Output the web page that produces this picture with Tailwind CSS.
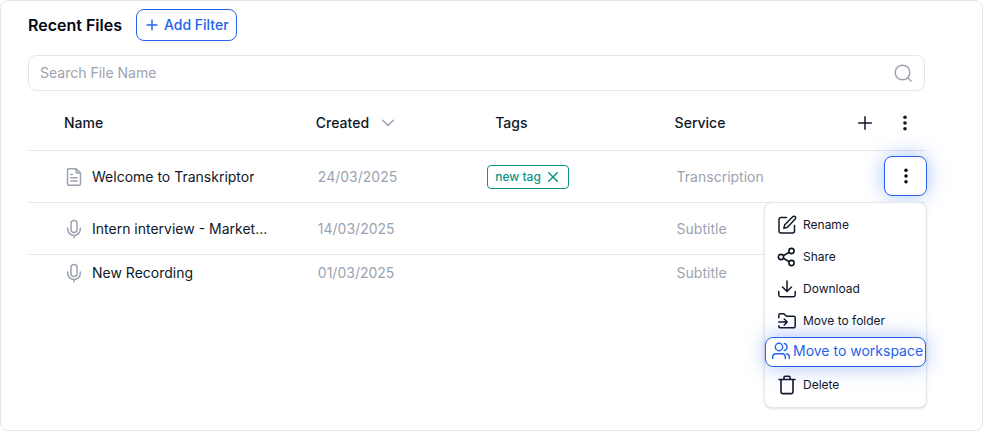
<!DOCTYPE html>
<html lang="en">
<head>
  <meta charset="utf-8">
  <meta name="viewport" content="width=device-width, initial-scale=1">
  <title>Recent Files</title>
  <script src="https://cdn.jsdelivr.net/npm/@tailwindcss/browser@4"></script>
</head>
<body class="bg-white font-['Inter',sans-serif] text-sm text-gray-900">
  <main class="min-h-screen border border-[#e5e7eb] rounded-lg pt-2 pl-[27px] pr-[57px] pb-6">
    <div class="flex items-center gap-[14px]">
      <h1 class="text-base font-semibold text-gray-950">Recent Files</h1>
      <button type="button" class="flex items-center gap-1 h-8 px-[7px] border border-[#2563eb] rounded-lg font-medium text-[#2563eb]">
        <svg class="size-4" viewBox="0 0 16 16" fill="none" stroke="currentColor" stroke-width="1.4" stroke-linecap="round"><path d="M8 3v10M3 8h10"/></svg>
        Add Filter
      </button>
    </div>

    <div class="relative mt-[14px]">
      <input type="text" aria-label="Search File Name" placeholder="Search File Name" class="block w-full h-9 border border-[#e5e7eb] rounded-lg pl-[11px] pr-10 pb-[2px] placeholder:text-[#9ca3af] focus:outline-none">
      <svg class="absolute right-3 top-2 size-5 text-[#9ca3af]" viewBox="0 0 20 20" fill="none" stroke="currentColor" stroke-width="1.5" stroke-linecap="round"><circle cx="9.5" cy="9.5" r="7.3"/><path d="M14.8 14.8L18 18"/></svg>
    </div>

    <table class="w-full table-fixed text-left">
      <thead>
        <tr class="h-[59px] border-b border-[#e5e7eb]">
          <th class="pl-9 pt-[6px] font-medium">Name</th>
          <th class="w-1/5 pl-[9px] pt-[6px] font-medium">
            <div class="flex items-center gap-[13px]">
              Created
              <svg class="w-3 h-2 text-[#9ca3af]" viewBox="0 0 12 8" fill="none" stroke="currentColor" stroke-width="1.5" stroke-linecap="round" stroke-linejoin="round"><path d="M.7 1.2L6 6.5l5.3-5.3"/></svg>
            </div>
          </th>
          <th class="w-1/5 pl-[9px] pt-[6px] font-medium">Tags</th>
          <th class="w-1/5 pl-[9px] pt-[6px] font-medium">Service</th>
          <th class="w-10 pt-[6px]">
            <button type="button" aria-label="Add column" class="block mx-auto">
              <svg class="size-4" viewBox="0 0 16 16" fill="none" stroke="currentColor" stroke-width="1.5" stroke-linecap="round"><path d="M8 1.7v12.6M1.7 8h12.6"/></svg>
            </button>
          </th>
          <th class="w-10 pt-[6px]">
            <button type="button" aria-label="Table options" class="block mx-auto">
              <svg class="size-4" viewBox="0 0 16 16" fill="currentColor"><circle cx="8" cy="2.2" r="1.8"/><circle cx="8" cy="8" r="1.8"/><circle cx="8" cy="13.8" r="1.8"/></svg>
            </button>
          </th>
        </tr>
      </thead>
      <tbody>
        <tr class="h-13 border-b border-[#e5e7eb]">
          <td class="pl-9 pt-px">
            <div class="flex items-center gap-2">
              <svg class="size-5 shrink-0 text-[#9ca3af]" viewBox="0 0 20 20" fill="none" stroke="currentColor" stroke-width="1.5" stroke-linecap="round" stroke-linejoin="round"><path d="M12.2 1.7H5A1.500 1.500 0 0 0 3.500 3.200v13.600A1.500 1.500 0 0 0 5 18.300h10a1.500 1.500 0 0 0 1.500-1.500V6zM12.200 1.900v3a1.200 1.200 0 0 0 1.200 1.200h3M6.800 7.500h1.500M6.800 10.800h6.400M6.800 14.100h6.400"/></svg>
              <a href="#" class="truncate">Welcome to Transkriptor</a>
            </div>
          </td>
          <td class="pl-[11px] pt-px text-[#9ca3af]">24/03/2025</td>
          <td class="pl-px pt-px">
            <span class="inline-flex items-center gap-1 h-6 px-[7px] border border-[#0d9488] rounded text-xs font-medium text-[#0d9488] align-middle">
              new tag
              <button type="button" aria-label="Remove tag">
                <svg class="size-4" viewBox="0 0 16 16" fill="none" stroke="currentColor" stroke-width="1.5" stroke-linecap="round"><path d="M3.700 3.700l8.600 8.600M12.300 3.700l-8.600 8.600"/></svg>
              </button>
            </span>
          </td>
          <td class="pl-[11px] pt-px text-[#9ca3af]">Transcription</td>
          <td></td>
          <td class="relative">
            <button type="button" aria-label="File options" class="flex items-center justify-center w-[43px] h-10 -mx-px border border-[#2563eb] rounded-lg bg-white shadow-[0_0_20px_rgba(37,99,235,0.4)]">
              <svg class="size-4 text-black" viewBox="0 0 16 16" fill="currentColor"><circle cx="8" cy="2.200" r="1.700"/><circle cx="8" cy="8" r="1.700"/><circle cx="8" cy="13.800" r="1.700"/></svg>
            </button>
            <div class="absolute top-full -right-[2px] w-[163px] py-[6px] rounded-lg border border-[#e5e7eb] bg-white shadow-sm text-xs">
              <button type="button" class="flex items-center gap-[6px] w-full h-8 pl-3">
                <svg class="size-5" viewBox="0 0 20 20" fill="none" stroke="currentColor" stroke-width="1.500" stroke-linecap="round" stroke-linejoin="round"><path d="M9.500 2.500H4A2 2 0 0 0 2 4.500V16a2 2 0 0 0 2 2h11.500a2 2 0 0 0 2-2v-5.500M15.700 1.700a1.700 1.700 0 0 1 2.500 2.400l-7.700 8.200-3.700 1.100.9-3.700z"/></svg>
                Rename
              </button>
              <button type="button" class="flex items-center gap-[6px] w-full h-8 pl-3">
                <svg class="size-5" viewBox="0 0 20 20" fill="none" stroke="currentColor" stroke-width="1.600"><circle cx="4" cy="10" r="2.600"/><circle cx="14.500" cy="4" r="2.600"/><circle cx="14.500" cy="16" r="2.600"/><path d="M6.300 8.700l6-3.500M6.300 11.300l6 3.500"/></svg>
                Share
              </button>
              <button type="button" class="flex items-center gap-[6px] w-full h-8 pl-3">
                <svg class="size-5" viewBox="0 0 20 20" fill="none" stroke="currentColor" stroke-width="1.500" stroke-linecap="round" stroke-linejoin="round"><path d="M10 2v10.200M5.500 8l4.500 4.500L14.500 8M1.800 12.500V16a1.700 1.700 0 0 0 1.700 1.700h13a1.700 1.700 0 0 0 1.700-1.700v-3.500"/></svg>
                Download
              </button>
              <button type="button" class="flex items-center gap-[6px] w-full h-8 pl-3">
                <svg class="size-5" viewBox="0 0 20 20" fill="none" stroke="currentColor" stroke-width="1.500" stroke-linecap="round" stroke-linejoin="round"><path d="M1.800 6.800V4.200a1.500 1.500 0 0 1 1.500-1.500h3.600l2.600 2.500h7.200a1.500 1.500 0 0 1 1.500 1.500v8.600a1.500 1.500 0 0 1-1.500 1.500H3a1.200 1.200 0 0 1-1.200-1.200v-.8M1.800 11H10M7.200 8l3 3-3 3"/></svg>
                Move to folder
              </button>
              <button type="button" class="relative flex items-center gap-[2px] w-full h-[30px] mb-[2px] pl-[5px] pb-px border border-[#2563eb] rounded-lg bg-white text-sm text-[#2563eb] whitespace-nowrap shadow-[0_0_20px_rgba(37,99,235,0.4)]">
                <svg class="size-5 shrink-0" viewBox="0 0 20 20" fill="none" stroke="currentColor" stroke-width="1.400" stroke-linecap="round" stroke-linejoin="round"><circle cx="8" cy="6" r="3.700"/><path d="M1.700 17.500V16A3.300 3.300 0 0 1 5 12.700h6a3.300 3.300 0 0 1 3.300 3.300v1.500M13.200 2.400a3.700 3.700 0 0 1 0 7.200M15.500 12.700a3.300 3.300 0 0 1 2.800 3.300v1.500"/></svg>
                Move to workspace
              </button>
              <button type="button" class="flex items-center gap-[6px] w-full h-8 pl-3">
                <svg class="size-5" viewBox="0 0 20 20" fill="none" stroke="currentColor" stroke-width="1.600" stroke-linecap="round" stroke-linejoin="round"><path d="M2 4.500h16M4 4.500V17a1.600 1.600 0 0 0 1.600 1.600h8.800A1.600 1.600 0 0 0 16 17V4.500M7 4.300V2.500a1.200 1.200 0 0 1 1.200-1.200h3.600A1.200 1.200 0 0 1 13 2.500v1.800"/></svg>
                Delete
              </button>
            </div>
          </td>
        </tr>
        <tr class="h-13 border-b border-[#e5e7eb]">
          <td class="pl-9 pt-px">
            <div class="flex items-center gap-2">
              <svg class="size-5 shrink-0 text-[#9ca3af]" viewBox="0 0 20 20" fill="none" stroke="currentColor" stroke-width="1.500" stroke-linecap="round"><rect x="7" y="1.500" width="6" height="12" rx="3"/><path d="M3.700 9v1.200a6.300 6.300 0 0 0 12.600 0V9M10 16.700v2"/></svg>
              <a href="#" class="truncate">Intern interview - Market...</a>
            </div>
          </td>
          <td class="pl-[11px] pt-px text-[#9ca3af]">14/03/2025</td>
          <td></td>
          <td class="pl-[11px] pt-px text-[#9ca3af]">Subtitle</td>
          <td></td>
          <td></td>
        </tr>
        <tr class="h-9">
          <td class="pl-9 pt-px">
            <div class="flex items-center gap-2">
              <svg class="size-5 shrink-0 text-[#9ca3af]" viewBox="0 0 20 20" fill="none" stroke="currentColor" stroke-width="1.500" stroke-linecap="round"><rect x="7" y="1.500" width="6" height="12" rx="3"/><path d="M3.700 9v1.200a6.300 6.300 0 0 0 12.600 0V9M10 16.700v2"/></svg>
              <a href="#" class="truncate">New Recording</a>
            </div>
          </td>
          <td class="pl-[11px] pt-px text-[#9ca3af]">01/03/2025</td>
          <td></td>
          <td class="pl-[11px] pt-px text-[#9ca3af]">Subtitle</td>
          <td></td>
          <td></td>
        </tr>
      </tbody>
    </table>
  </main>
</body>
</html>
